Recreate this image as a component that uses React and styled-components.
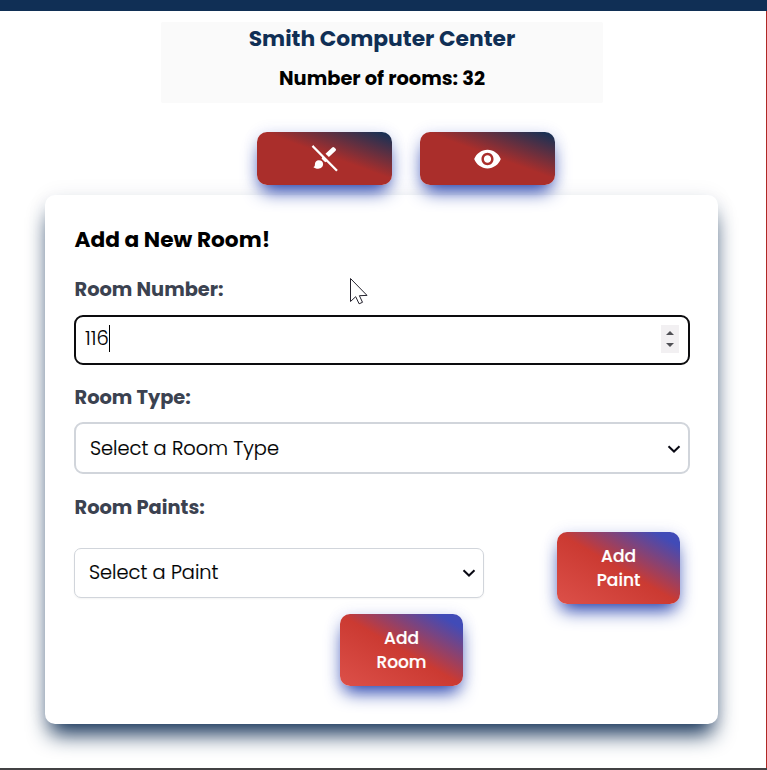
import React from 'react';
import styled, { createGlobalStyle, css } from 'styled-components';

const GlobalStyle = createGlobalStyle`
  *, *::before, *::after { box-sizing: border-box; }
  body {
    margin: 0;
    background: #fff;
    color: #000;
    font-family: Poppins, Inter, sans-serif;
    font-feature-settings: "cv11";
    overflow: hidden;
  }
`;

const Page = styled.div`
  height: 770px;
  display: flex;
  flex-direction: column;
  border-bottom: 2px solid #434244;
`;

const TopBar = styled.header`
  flex: none;
  height: 11px;
  background: #102f55;
`;

const Main = styled.main`
  flex: 1;
  display: flex;
  flex-direction: column;
  border-right: 1px solid #b02825;
`;

const Summary = styled.section`
  flex: none;
  width: 442px;
  height: 81px;
  margin: 11px 0 0 161px;
  padding-top: 1px;
  display: flex;
  flex-direction: column;
  align-items: center;
  border-radius: 2px;
  background: #fafafa;
`;

const BuildingName = styled.h1`
  margin: 0;
  color: #102f55;
  font-size: 21.8px;
  font-weight: 700;
  line-height: 32px;
`;

const RoomCount = styled.h2`
  margin: 10px 0 0;
  font-size: 19.4px;
  font-weight: 700;
  line-height: 28px;
`;

const Actions = styled.div`
  position: relative;
  z-index: 1;
  flex: none;
  display: flex;
  gap: 28px;
  margin: 29px 0 0 257px;
`;

const raised = css`
  border: 0;
  border-radius: 10px;
  color: #fff;
  box-shadow: 0 10px 18px -4px rgb(34, 62, 172), 0 0 15px rgba(58, 78, 200, 0.12);
`;

const IconButton = styled.button`
  ${raised}
  width: 135px;
  height: 53px;
  padding: 0;
  display: flex;
  align-items: center;
  justify-content: center;
  background: linear-gradient(20deg, #aa2e2b 0%, #aa2e2b 54%, #1a3155 96%);
`;

const GradientButton = styled.button`
  ${raised}
  flex: none;
  width: 123px;
  height: 72px;
  padding: 0 30px 1px;
  background: linear-gradient(30deg, #dc5049 0%, #cb3a32 50%, #414bb7 90%);
  font-family: inherit;
  font-feature-settings: inherit;
  font-size: 17px;
  font-weight: 500;
  line-height: 24px;
  -webkit-text-stroke: 0.2px #fff;
`;

const Card = styled.form`
  flex: none;
  width: 673px;
  height: 529px;
  margin: 10px 0 0 45px;
  padding: 29px 28px 0 29.5px;
  display: flex;
  flex-direction: column;
  border-radius: 10px;
  background: #fff;
  box-shadow: 0 15px 21px -5px #102f55, 0 0 20px rgba(16, 47, 85, 0.07);
`;

const CardTitle = styled.h2`
  margin: 0 0 20px;
  font-size: 21.7px;
  font-weight: 700;
  line-height: 32px;
`;

const Label = styled.label`
  height: 28px;
  margin-top: ${(p) => p.$top || 0}px;
  color: #3b4250;
  font-size: 19.4px;
  font-weight: 700;
  line-height: 28px;
`;

const NumberField = styled.div`
  height: 50px;
  margin: 11px 0 0 -0.5px;
  padding: 0 9px;
  display: flex;
  align-items: center;
  justify-content: space-between;
  border: 2px solid #0c0c0e;
  border-radius: 9px;
  background: #fff;
`;

const NumberValue = styled.span`
  height: 27px;
  margin-top: -3px;
  padding-right: 0.5px;
  border-right: 1px solid #000;
  font-size: 19.5px;
  font-weight: 300;
  line-height: 27px;
  -webkit-text-stroke: 0.1px #000;
`;

const Stepper = styled.span`
  width: 18px;
  height: 28px;
  margin-top: -2px;
  display: flex;
  flex-direction: column;
  align-items: center;
  justify-content: center;
  gap: 8px;
  background: #f2f0f2;
`;

const Arrow = styled.i`
  border: 4px solid transparent;
  border-width: ${(p) => (p.$down ? '4px 4px 0' : '0 4px 4px')};
  border-${(p) => (p.$down ? 'top' : 'bottom')}-color: #505055;
`;

const SelectBox = styled.div`
  width: ${(p) => p.$width};
  height: ${(p) => p.$height}px;
  margin: ${(p) => p.$top}px 0 0 -0.5px;
  padding: ${(p) => (p.$border > 1 ? 1 : 0)}px 7px 0 14px;
  display: flex;
  align-items: center;
  justify-content: space-between;
  border: ${(p) => p.$border}px solid #d1d5db;
  border-radius: ${(p) => (p.$border > 1 ? 9 : 7)}px;
  background: #fff;
  box-shadow: ${(p) => (p.$border > 1 ? 'none' : '0 1px 2px rgba(0, 0, 0, 0.05)')};
  font-size: 19.35px;
  font-weight: 300;
  line-height: 28px;
  -webkit-text-stroke: 0.2px #000;
`;

const PaintRow = styled.div`
  margin: 10px 10px 0 0;
  display: flex;
  align-items: flex-start;
  justify-content: space-between;
`;

const SubmitRow = styled.div`
  margin: 10px 0 0 265.5px;
`;

const Pointer = styled.svg`
  position: absolute;
  left: 349px;
  top: 277px;
`;

const BrushOffIcon = () => (
  <svg width="28" height="30" viewBox="0 0 28 30" fill="#fff">
    <path d="M21.2 3.4a1.5 1.5 0 0 1 2.1 0l1.3 1.3a1.5 1.5 0 0 1 0 2.1l-6.7 6.3-3.4-3.4z" />
    <path d="m11.7 12.4 4.6 4.6-2 1.2-3.7-3.5z" />
    <path d="M7.8 16.3c2.6 0 4.3 1.6 4.3 3.8 0 2.8-2.1 4.6-4.9 4.6-2 0-3.8-.6-4.9-1.8 1.2 0 1.6-.8 1.6-2.3 0-2.5 1.5-4.3 3.9-4.3z" />
    <path d="M2.3 2.7 25.2 25.9" fill="none" stroke="#fff" strokeWidth="2.3" strokeLinecap="square" />
  </svg>
);

const EyeIcon = () => (
  <svg width="29" height="30" viewBox="0 0 24 24" preserveAspectRatio="none" fill="#fff">
    <path d="M12 4.5C7 4.5 2.73 7.61 1 12c1.73 4.39 6 7.5 11 7.5s9.27-3.11 11-7.5c-1.73-4.39-6-7.5-11-7.5zM12 17c-2.76 0-5-2.24-5-5s2.24-5 5-5 5 2.24 5 5-2.24 5-5 5zm0-8c-1.66 0-3 1.34-3 3s1.34 3 3 3 3-1.34 3-3-1.34-3-3-3z" />
  </svg>
);

const Chevron = () => (
  <svg width="14" height="10" viewBox="0 0 14 10" fill="none" stroke="#0a0a14" strokeWidth="2">
    <path d="m1.5 2.2 5.5 5.3 5.5-5.3" />
  </svg>
);

export default function App() {
  return (
    <>
      <GlobalStyle />
      <Page>
        <TopBar />
        <Main>
          <Summary>
            <BuildingName>Smith Computer Center</BuildingName>
            <RoomCount>Number of rooms: 32</RoomCount>
          </Summary>
          <Actions>
            <IconButton type="button" aria-label="Hide paints"><BrushOffIcon /></IconButton>
            <IconButton type="button" aria-label="Show rooms"><EyeIcon /></IconButton>
          </Actions>
          <Card>
            <CardTitle>Add a New Room!</CardTitle>
            <Label>Room Number:</Label>
            <NumberField>
              <NumberValue>116</NumberValue>
              <Stepper><Arrow /><Arrow $down /></Stepper>
            </NumberField>
            <Label $top={19}>Room Type:</Label>
            <SelectBox $width="616px" $height={52} $top={10} $border={2}>
              Select a Room Type
              <Chevron />
            </SelectBox>
            <Label $top={20}>Room Paints:</Label>
            <PaintRow>
              <SelectBox $width="410px" $height={50} $top={16} $border={1}>
                Select a Paint
                <Chevron />
              </SelectBox>
              <GradientButton type="button">Add Paint</GradientButton>
            </PaintRow>
            <SubmitRow>
              <GradientButton type="button">Add Room</GradientButton>
            </SubmitRow>
          </Card>
        </Main>
      </Page>
      <Pointer width="20" height="29" viewBox="0 0 20 29" fill="#fff" stroke="#24222d" strokeWidth="1">
        <path d="M1.5 1.5v23l5.2-4.8 3.4 7.1 3.4-1.5-3.1-6.6 7.6-.3z" />
      </Pointer>
    </>
  );
}
